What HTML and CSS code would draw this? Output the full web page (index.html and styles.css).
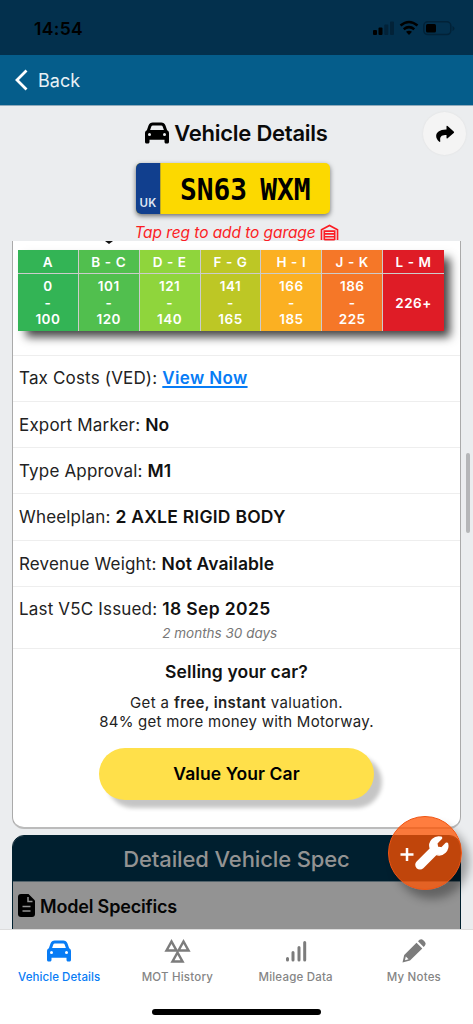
FILE: index.html
```html
<!DOCTYPE html>
<html lang="en">
<head>
<meta charset="utf-8">
<title>Vehicle Details</title>
<link rel="stylesheet" href="styles.css">
</head>
<body>
<svg class="defs" width="0" height="0">
  <symbol id="car" viewBox="0 0 512 512"><path d="M135.2 117.4L109.1 192H402.9l-26.1-74.6C372.3 104.6 360.2 96 346.6 96H165.4c-13.6 0-25.7 8.6-30.2 21.4zM39.6 196.8L74.8 96.3C88.3 57.8 124.6 32 165.4 32H346.6c40.8 0 77.1 25.8 90.6 64.3l35.2 100.5c23.2 9.6 39.6 32.5 39.6 59.2V400v48c0 17.7-14.3 32-32 32H448c-17.7 0-32-14.3-32-32V400H96v48c0 17.7-14.3 32-32 32H32c-17.7 0-32-14.3-32-32V400 256c0-26.7 16.4-49.6 39.6-59.2zM128 288a32 32 0 1 0 -64 0 32 32 0 1 0 64 0zm288 32a32 32 0 1 0 0-64 32 32 0 1 0 0 64z"/></symbol>
</svg>
<div class="screen">
  <div class="status">
    <span class="time">14:54</span>
    <svg class="signals" width="84" height="18" viewBox="0 0 84 18">
      <rect x="1" y="10" width="4" height="5" rx="1"/><rect x="6.500" y="7.500" width="4" height="7.500" rx="1"/>
      <g class="faint"><rect x="12.300" y="4.500" width="4" height="10.500" rx="1"/><rect x="18" y="1.500" width="4" height="13.500" rx="1"/></g>
      <g class="arc"><path d="M28.500 5.500Q37 -1.500 45.500 5.500"/><path d="M31.700 9.200Q37 5 42.300 9.200"/></g>
      <path d="M34 11.800Q37 9.500 40 11.800L37 15Z"/>
      <rect class="shell" x="51.800" y="1.800" width="27" height="12.800" rx="4"/><rect x="54" y="4" width="10" height="8.500" rx="1.500"/><path class="faint" d="M80.500 6v5q2-1 2-2.500t-2-2.500"/>
    </svg>
  </div>
  <div class="nav">
    <svg width="14" height="22" viewBox="0 0 14 22"><path class="chev" d="M12.500 1.500L3 11L12.500 20.500"/></svg>
    <span>Back</span>
  </div>
  <header class="head">
    <h1><svg class="caricon" width="24" height="24"><use href="#car"/></svg><span>Vehicle Details</span></h1>
    <div class="plate"><div class="uk">UK</div><div class="reg"><span>SN63 WXM</span></div></div>
    <div class="tap"><span>Tap reg to add to garage</span>
      <svg width="19" height="17" viewBox="0 0 20 18"><path d="M1.500 17V6L10 1.500L18.500 6V17M4.500 17V7.500H15.500V17M4.500 10.500H15.500M4.500 13.500H15.500M4.500 16.500H15.500"/></svg></div>
    <div class="share"><svg width="20" height="18" viewBox="0 0 20 18"><path d="M11.500 1.500Q11.500 .2 12.600 1L18.700 6.400Q19.500 7.200 18.700 8L12.600 13.300Q11.500 14 11.500 12.800V10C7 10 4.500 11 5.300 16.200C5.300 17.200 4.600 17.200 4 16.600C-1.500 11.500 1 4.300 11.500 4.500Z"/></svg></div>
  </header>
  <main class="scroll">
    <section class="card">
      <div class="arrow"></div>
      <div class="bands">
        <div class="band a"><b>A</b><p>0<br>-<br>100</p></div>
        <div class="band b"><b>B - C</b><p>101<br>-<br>120</p></div>
        <div class="band d"><b>D - E</b><p>121<br>-<br>140</p></div>
        <div class="band f"><b>F - G</b><p>141<br>-<br>165</p></div>
        <div class="band h"><b>H - I</b><p>166<br>-<br>185</p></div>
        <div class="band j"><b>J - K</b><p>186<br>-<br>225</p></div>
        <div class="band l"><b>L - M</b><p>226+</p></div>
      </div>
      <div class="row"><span>Tax Costs (VED):</span><a>View Now</a></div>
      <div class="row"><span>Export Marker:</span><b>No</b></div>
      <div class="row"><span>Type Approval:</span><b>M1</b></div>
      <div class="row"><span>Wheelplan:</span><b class="axle">2 AXLE RIGID BODY</b></div>
      <div class="row"><span>Revenue Weight:</span><b>Not Available</b></div>
      <div class="row last"><span>Last V5C Issued:</span><div><b class="date">18 Sep 2025</b><i>2 months 30 days</i></div></div>
      <div class="sell">
        <h2>Selling your car?</h2>
        <p><span class="l1">Get a <b>free, instant</b> valuation.</span><br><span>84% get more money with Motorway.</span></p>
        <div class="cta"><span>Value Your Car</span></div>
      </div>
    </section>
    <section class="spec">
      <h2><span>Detailed Vehicle Spec</span></h2>
      <div class="model"><svg width="17" height="23" viewBox="0 0 17 23"><path d="M3 0H10.500L17 6.500V20Q17 23 14 23H3Q0 23 0 20V3Q0 0 3 0Z"/><path class="cut" d="M10 3V7.500H14.500M4.500 12.500H12.500M4.500 17H12.500"/></svg><span>Model Specifics</span></div>
    </section>
  </main>
  <nav class="tabs">
    <div class="tab on"><svg width="24" height="26"><use href="#car" width="24" height="24" y="1"/></svg><span>Vehicle Details</span></div>
    <div class="tab"><svg width="28" height="26" viewBox="0 0 28 26"><path class="tri" d="M3.500 12.500L8.500 3.500L13.500 12.500ZM15.500 12.500L20.500 3.500L25.500 12.500ZM9.500 23.500L14.500 14.500L19.500 23.500Z"/></svg><span>MOT History</span></div>
    <div class="tab"><svg width="24" height="26" viewBox="0 0 24 26"><path class="bars" d="M3.500 20.500V22M9 14.500V22M15 9.500V22M20.700 4.500V22"/></svg><span>Mileage Data</span></div>
    <div class="tab"><svg width="26" height="26" viewBox="0 0 26 26"><path d="M15.500 4.700L21.300 10.500L9 22.500L1.500 24.500L3.200 17ZM17 3.300L18.500 1.800Q20.500 .5 22.300 2.200L24 4Q25.400 5.800 24 7.500L22.700 9Z"/><path class="nib" d="M4.800 18.500L7.600 21.300L4 22.200Z"/></svg><span>My Notes</span></div>
  </nav>
  <div class="home"></div>
  <div class="scrollbar"></div>
  <div class="fab"><svg width="73" height="73" viewBox="0 0 73 73"><path class="plus" d="M11.500 37.500H24.500M18 31V44"/><g transform="translate(27 20) scale(.062)"><path class="wrench" d="M507.730 109.100c-2.240-9.030-13.540-12.090-20.120-5.510l-74.360 74.360-67.880-11.310-11.310-67.880 74.360-74.360c6.620-6.620 3.430-17.900-5.660-20.160-47.380-11.740-99.550.910-136.580 37.930-39.640 39.640-50.550 97.100-34.050 147.200L18.740 402.760c-24.990 24.990-24.990 65.510 0 90.500 24.990 24.990 65.510 24.990 90.500 0l213.210-213.210c50.120 16.710 107.470 5.680 147.370-34.220 37.070-37.070 49.700-89.320 37.910-136.730z"/></g></svg></div>
</div>
</body>
</html>
```
FILE: styles.css
```css
* { box-sizing: border-box; }
body { margin: 0; font-family: Inter, "Liberation Sans", sans-serif; color: #111; }
h1, h2, p { margin: 0; }
b { font-weight: 600; }
span { white-space: nowrap; }
svg { flex: none; }
.defs { position: absolute; }
.screen { position: relative; width: 473px; height: 1024px; overflow: hidden; background: #ebedef; display: flex; flex-direction: column; }

.status { height: 55px; flex: none; background: #03304d; display: flex; justify-content: space-between; padding: 18px 17px 0 34px; color: #000; }
.time { font-size: 17.500px; font-weight: 600; line-height: 22px; letter-spacing: .35px; }
.signals { margin-top: 2px; }
.faint { fill: #022238; }
.arc { fill: none; stroke: #000; stroke-width: 2.500; }
.shell { fill: none; stroke: #022238; stroke-width: 1.500; }

.nav { height: 50px; flex: none; background: #055d8b; display: flex; align-items: center; padding-left: 14px; gap: 10px; color: #e8f1f6; font-size: 18px; }
.chev { fill: none; stroke: #fff; stroke-width: 2.800; }

.head { position: relative; flex: none; height: 136px; border-top: 1px solid #91abbc; display: flex; flex-direction: column; align-items: center; }
h1 { flex: none; height: 28px; margin-top: 13px; display: flex; align-items: center; gap: 5px; font-size: 22px; font-weight: 600; letter-spacing: -.25px; color: #0a0a0a; }
.plate { flex: none; width: 194px; height: 51px; margin-top: 16px; margin-right: 7px; border-radius: 5px; display: flex; background: #fcd900; box-shadow: 0 2px 5px #0008; }
.uk { width: 25px; border-right: 1px solid #bba92a; background: #113f8e; border-radius: 5px 0 0 5px; color: #dfe6f3; font-size: 11.500px; font-weight: 600; display: flex; align-items: flex-end; justify-content: center; padding-bottom: 4px; letter-spacing: .2px; }
.reg { flex: 1; display: flex; align-items: center; justify-content: center; padding-top: 2px; color: #000; font: bold 30px "DejaVu Sans Mono", monospace; }
.reg span { transform: scaleX(.93); word-spacing: -4px; }
.tap { flex: none; display: flex; align-items: center; gap: 4px; height: 22px; margin-top: 7px; color: #fb1d24; font-size: 15.500px; letter-spacing: -.08px; font-style: italic; }
.tap path { fill: none; stroke: #fb1d24; stroke-width: 1.700; }
.share { position: absolute; right: 7px; top: 6px; width: 43px; height: 43px; border-radius: 50%; background: #f4f4f4; box-shadow: 0 0 2px #ddd; display: flex; align-items: center; justify-content: center; }

.scroll { height: 688px; flex: none; padding: 0 12px; overflow: hidden; }
.card { position: relative; height: 588px; background: #fff; border: 1px solid #aaa; border-width: 0 1px 1px; border-bottom: 2px solid #bbb; border-radius: 0 0 12px 12px; }
.arrow { position: absolute; left: 92px; top: 0; border: 4px solid transparent; border-top: 3px solid #111; border-bottom: 0; }
.card::before { content: ""; display: block; height: 9px; }
.bands { width: 426px; height: 81px; margin-left: 5px; display: grid; grid-template-columns: repeat(7, 1fr); box-shadow: 7px 7px 9px -1px #000b; }
.band { display: flex; flex-direction: column; border-right: 1px solid #ccc; color: #fff; text-align: center; font-size: 13.500px; font-weight: 600; letter-spacing: .5px; line-height: 16.500px; }
.band b { height: 24px; line-height: 24px; border-bottom: 1px solid #ccc; letter-spacing: .6px; }
.band p { padding-top: 4px; }
.a { background: #33b455; } .b { background: #51bf4e; } .d { background: #8fd53c; } .f { background: #bdc725; }
.h { background: #fbb022; } .j { background: #f57728; } .l { background: #df1c26; border-right: 0; }
.band.l p { padding-top: 21px; }
.bands + .row { margin-top: 23.500px; }
.row { height: 46.250px; border-top: 1px solid #eee; padding-left: 6px; display: flex; align-items: baseline; line-height: 45px; gap: 5px; font-size: 17px; letter-spacing: .17px; color: #222; }
.row b { color: #111; font-size: 17.500px; letter-spacing: .1px; }
.row .axle { letter-spacing: .24px; }
.row .date { letter-spacing: .36px; }
.row a { color: #087cf5; font-weight: 600; letter-spacing: .35px; text-decoration: underline; text-underline-offset: 2px; text-decoration-thickness: 1.500px; }
.row.last { height: 62.500px; line-height: 22px; padding-top: 11px; }
.last i { display: block; font-size: 13.500px; line-height: 20px; margin-top: 3px; letter-spacing: 0; color: #777; }
.last div { height: 44px; }
.sell { border-top: 1px solid #eee; text-align: center; display: flex; flex-direction: column; align-items: center; }
.sell h2 { font-size: 17.500px; line-height: 22px; font-weight: 600; margin-top: 11.500px; letter-spacing: .1px; }
.sell p { font-size: 15px; line-height: 19px; margin-top: 10px; letter-spacing: .26px; color: #222; }
.sell .l1 { letter-spacing: .38px; }
.cta { width: 275px; height: 52px; margin-top: 17px; background: #ffe04a; border-radius: 26px; box-shadow: 8px 8px 4px #0000003a; display: flex; align-items: center; justify-content: center; font-size: 17.500px; font-weight: 600; letter-spacing: .08px; color: #000; }

.spec { margin-top: 6px; height: 110px; border: 1px solid #00202f; background: #939393; border-radius: 12px 12px 0 0; overflow: hidden; }
.spec h2 { height: 46px; background: #001f2f; border-bottom: 1px solid #53636b; color: #939393; display: flex; align-items: center; justify-content: center; font-size: 22px; font-weight: 500; letter-spacing: -.12px; }
.model { height: 49px; display: flex; align-items: center; padding-left: 5px; gap: 5px; color: #050505; font-size: 18px; font-weight: 600; letter-spacing: -.18px; }
.model svg { margin-bottom: 3px; }
.cut { fill: none; stroke: #939393; stroke-width: 1.500; }

.tabs { height: 95px; flex: none; background: #fff; border-top: 1px solid #ddd; display: grid; grid-template-columns: repeat(4, 1fr); }
.tab { display: flex; flex-direction: column; align-items: center; padding-top: 8px; font-size: 11.500px; font-weight: 500; line-height: 16px; color: #858585; fill: #7c7c7c; gap: 5px; letter-spacing: .2px; }
.on { color: #087cf5; fill: #087cf5; letter-spacing: .08px; }
.tri { fill: none; stroke: #7c7c7c; stroke-width: 2.500; }
.bars { stroke: #7c7c7c; stroke-width: 3; stroke-linecap: round; }
.nib { fill: #fff; }
.home { position: absolute; left: 152px; top: 1009px; width: 169px; height: 6px; border-radius: 3px; background: #000; }
.scrollbar { position: absolute; right: 3px; top: 453px; width: 4px; height: 80px; border-radius: 2px; background: #b5b6b8; }
.fab { position: absolute; left: 388px; top: 816px; width: 74px; height: 74px; border: 1px solid #f05412; border-radius: 50%; background: #ff5200c0; box-shadow: 7px 9px 10px #0005; }
.fab svg { fill: #fff; }
.plus { stroke: #fff; stroke-width: 2.500; }
.wrench { stroke: #fff; stroke-width: 25; }
```
